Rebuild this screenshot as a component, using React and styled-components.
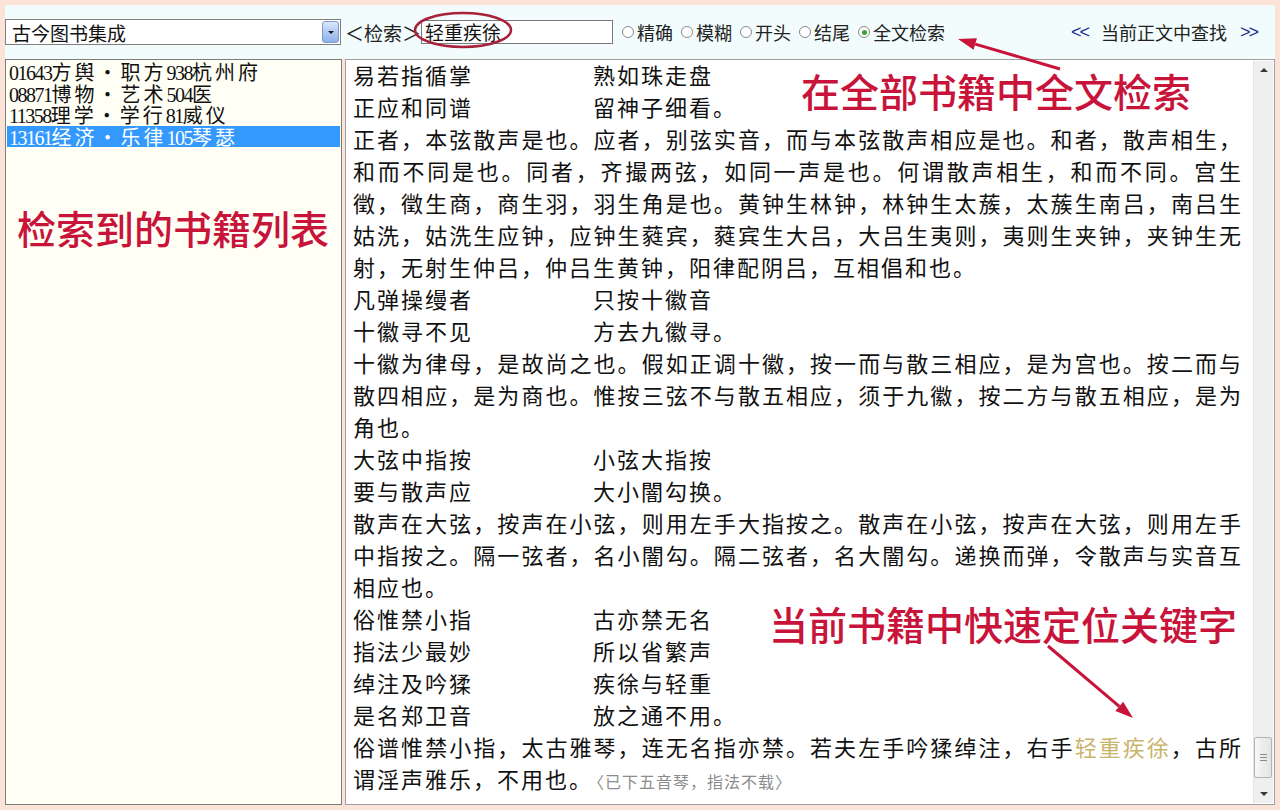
import React from 'react';
import styled, { createGlobalStyle } from 'styled-components';

const GlobalStyle = createGlobalStyle`
  html, body {
    margin: 0;
    padding: 0;
    background: #fbe3d7;
  }
  body {
    font-family: "Noto Sans CJK SC", "Liberation Sans", sans-serif;
    color: #111;
  }
`;

const books = [
  '01643方舆・职方938杭州府',
  '08871博物・艺术504医',
  '11358理学・学行81威仪',
  '13161经济・乐律105琴瑟',
];

const radios = [
  { label: '精确' },
  { label: '模糊' },
  { label: '开头' },
  { label: '结尾' },
  { label: '全文检索', checked: true },
];

// kind: v = verse (two columns), f = full justified line, l = last line of a paragraph
const lines = [
  { kind: 'v', a: '易若指循掌', b: '熟如珠走盘' },
  { kind: 'v', a: '正应和同谱', b: '留神子细看。' },
  { kind: 'f', t: '正者，本弦散声是也。应者，别弦实音，而与本弦散声相应是也。和者，散声相生，' },
  { kind: 'f', t: '和而不同是也。同者，齐撮两弦，如同一声是也。何谓散声相生，和而不同。宫生' },
  { kind: 'f', t: '徵，徵生商，商生羽，羽生角是也。黄钟生林钟，林钟生太蔟，太蔟生南吕，南吕生' },
  { kind: 'f', t: '姑洗，姑洗生应钟，应钟生蕤宾，蕤宾生大吕，大吕生夷则，夷则生夹钟，夹钟生无' },
  { kind: 'l', t: '射，无射生仲吕，仲吕生黄钟，阳律配阴吕，互相倡和也。' },
  { kind: 'v', a: '凡弹操缦者', b: '只按十徽音' },
  { kind: 'v', a: '十徽寻不见', b: '方去九徽寻。' },
  { kind: 'f', t: '十徽为律母，是故尚之也。假如正调十徽，按一而与散三相应，是为宫也。按二而与' },
  { kind: 'f', t: '散四相应，是为商也。惟按三弦不与散五相应，须于九徽，按二方与散五相应，是为' },
  { kind: 'l', t: '角也。' },
  { kind: 'v', a: '大弦中指按', b: '小弦大指按' },
  { kind: 'v', a: '要与散声应', b: '大小闇勾换。' },
  { kind: 'f', t: '散声在大弦，按声在小弦，则用左手大指按之。散声在小弦，按声在大弦，则用左手' },
  { kind: 'f', t: '中指按之。隔一弦者，名小闇勾。隔二弦者，名大闇勾。递换而弹，令散声与实音互' },
  { kind: 'l', t: '相应也。' },
  { kind: 'v', a: '俗惟禁小指', b: '古亦禁无名' },
  { kind: 'v', a: '指法少最妙', b: '所以省繁声' },
  { kind: 'v', a: '绰注及吟猱', b: '疾徐与轻重' },
  { kind: 'v', a: '是名郑卫音', b: '放之通不用。' },
];

const Page = styled.div`
  position: relative;
  width: 1280px;
  height: 810px;
  padding: 5px;
  box-sizing: border-box;
  display: flex;
  flex-direction: column;
  overflow: hidden;
`;

const Toolbar = styled.div`
  height: 54px;
  flex-shrink: 0;
  background: #f2fcfc;
  display: flex;
  align-items: center;
  padding: 0 18px 0 0;
  font-size: 18px;
`;

const Select = styled.div`
  width: 336px;
  height: 26px;
  box-sizing: border-box;
  border: 1px solid #7f7f7f;
  background: #fff;
  display: flex;
  align-items: center;
  padding-left: 6px;
  font-size: 19px;
  color: #111;
`;

const SelectText = styled.span`
  flex: 1;
`;

const DropButton = styled.span`
  width: 17px;
  height: 22px;
  margin-right: 1px;
  box-sizing: border-box;
  border: 1px solid #7a9bd0;
  border-radius: 3px;
  background: linear-gradient(to bottom, #dbe8fb 0%, #b4cdf2 45%, #8fb1e8 100%);
  display: flex;
  align-items: center;
  justify-content: center;

  &::after {
    content: '';
    border-left: 3px solid transparent;
    border-right: 3px solid transparent;
    border-top: 3px solid #1a1a1a;
  }
`;

const SearchLabel = styled.span`
  margin-left: 4px;
  font-size: 19px;
  color: #222;
`;

const SearchInput = styled.div`
  width: 192px;
  height: 24px;
  box-sizing: border-box;
  border: 1px solid #7a7a7a;
  background: #fff;
  padding-left: 3px;
  font-size: 19px;
  line-height: 22px;
  color: #111;
`;

const RadioGroup = styled.div`
  margin-left: 9px;
  display: flex;
  align-items: center;
  gap: 8px;
`;

const RadioItem = styled.label`
  display: flex;
  align-items: center;
  gap: 3px;
  color: #222;
  font-size: 18px;
`;

const RadioDot = styled.span`
  width: 12px;
  height: 12px;
  box-sizing: border-box;
  border: 1px solid #8a8a8a;
  border-radius: 50%;
  background: #fff;
  display: flex;
  align-items: center;
  justify-content: center;

  &::after {
    content: '';
    width: 5px;
    height: 5px;
    border-radius: 50%;
    background: ${p => (p.$on ? '#35a535' : 'transparent')};
  }
`;

const FindLink = styled.div`
  margin-left: auto;
  display: flex;
  align-items: center;
  gap: 13px;
  color: #222;
`;

const Chevron = styled.span`
  font-family: "Liberation Sans", sans-serif;
  font-size: 18px;
  letter-spacing: -2px;
  color: #1b2b8f;
`;

const Main = styled.div`
  flex: 1;
  display: flex;
  gap: 3px;
  min-height: 0;
`;

const ListPanel = styled.div`
  width: 337px;
  box-sizing: border-box;
  border: 1px solid #7d7d7d;
  background: #fffff5;
  padding: 1px 1px;
`;

const ListItem = styled.div`
  height: 21.5px;
  line-height: 21.5px;
  padding-left: 2px;
  font-size: 20px;
  letter-spacing: 3px;
  white-space: nowrap;
  color: ${p => (p.$active ? '#fff' : '#111')};
  background: ${p => (p.$active ? '#3399ff' : 'transparent')};
`;

const Num = styled.span`
  font-family: "Liberation Serif", serif;
  font-size: 20px;
  letter-spacing: -1.5px;
`;

const TextPanel = styled.div`
  flex: 1;
  box-sizing: border-box;
  border: 1px solid #a0a0a0;
  background: #fff;
  display: flex;
  min-width: 0;
`;

const Content = styled.div`
  flex: 1;
  margin-top: -2px;
  padding: 0 12px 0 7px;
  font-size: 22px;
  line-height: 32px;
  color: #111;
  overflow: hidden;
`;

const Verse = styled.div`
  display: grid;
  grid-template-columns: 240px 1fr;
  letter-spacing: 2px;
  white-space: nowrap;
`;

const Line = styled.div`
  white-space: nowrap;
  text-align: justify;
  text-align-last: ${p => (p.$full ? 'justify' : 'left')};
  letter-spacing: ${p => (p.$full ? '0' : '2px')};
`;

const Mark = styled.span`
  color: #c9b46c;
`;

const Note = styled.span`
  margin-left: 3px;
  font-size: 16px;
  letter-spacing: 1px;
  color: #8c8c8c;
`;

const Scrollbar = styled.div`
  width: 20px;
  margin: 1px 1px 1px 0;
  background: #efefef;
  border-left: 1px solid #e4e4e4;
  box-sizing: border-box;
  display: flex;
  flex-direction: column;
`;

const ScrollButton = styled.div`
  height: 18px;
  display: flex;
  align-items: center;
  justify-content: center;

  &::after {
    content: '';
    border-left: 4px solid transparent;
    border-right: 4px solid transparent;
    ${p => (p.$down ? 'border-top' : 'border-bottom')}: 4px solid #3a3a3a;
  }
`;

const Track = styled.div`
  flex: 1;
  display: flex;
  flex-direction: column;
  justify-content: flex-end;
  padding-bottom: 7px;
`;

const Thumb = styled.div`
  height: 41px;
  margin: 0 1px 0 0;
  box-sizing: border-box;
  border: 1px solid #b3b3b3;
  border-radius: 2px;
  background: linear-gradient(to right, #f7f7f7, #e3e3e3);
  display: flex;
  flex-direction: column;
  align-items: center;
  justify-content: center;
  gap: 2px;
`;

const Grip = styled.span`
  width: 7px;
  height: 1px;
  background: #8a8a8a;
`;

const Overlay = styled.svg`
  position: absolute;
  left: 0;
  top: 0;
  pointer-events: none;
`;

const Callout = styled.div`
  position: absolute;
  left: ${p => p.$x}px;
  top: ${p => p.$y}px;
  font-size: 39px;
  line-height: 39px;
  font-weight: 500;
  color: #c8143a;
  white-space: nowrap;
  pointer-events: none;
`;

function withNums(text) {
  return text.split(/(\d+)/).map((part, i) =>
    /^\d+$/.test(part) ? <Num key={i}>{part}</Num> : <React.Fragment key={i}>{part}</React.Fragment>
  );
}

function Arrow({ from, to }) {
  const dx = to[0] - from[0];
  const dy = to[1] - from[1];
  const len = Math.hypot(dx, dy);
  const ux = dx / len;
  const uy = dy / len;
  const bx = to[0] - ux * 18;
  const by = to[1] - uy * 18;
  const nx = -uy * 6;
  const ny = ux * 6;
  return (
    <g>
      <line x1={from[0]} y1={from[1]} x2={bx} y2={by} stroke="#c8143a" strokeWidth="3" />
      <polygon
        points={`${to[0]},${to[1]} ${bx + nx},${by + ny} ${bx - nx},${by - ny}`}
        fill="#c8143a"
      />
    </g>
  );
}

export default function App() {
  return (
    <Page>
      <GlobalStyle />
      <Toolbar>
        <Select>
          <SelectText>古今图书集成</SelectText>
          <DropButton />
        </Select>
        <SearchLabel>＜检索＞</SearchLabel>
        <SearchInput>轻重疾徐</SearchInput>
        <RadioGroup>
          {radios.map(r => (
            <RadioItem key={r.label}>
              <RadioDot $on={r.checked} />
              {r.label}
            </RadioItem>
          ))}
        </RadioGroup>
        <FindLink>
          <Chevron>&lt;&lt;</Chevron>
          <span>当前正文中查找</span>
          <Chevron>&gt;&gt;</Chevron>
        </FindLink>
      </Toolbar>

      <Main>
        <ListPanel>
          {books.map((b, i) => (
            <ListItem key={b} $active={i === books.length - 1}>
              {withNums(b)}
            </ListItem>
          ))}
        </ListPanel>

        <TextPanel>
          <Content>
            {lines.map((ln, i) =>
              ln.kind === 'v' ? (
                <Verse key={i}>
                  <span>{ln.a}</span>
                  <span>{ln.b}</span>
                </Verse>
              ) : (
                <Line key={i} $full={ln.kind === 'f'}>
                  {ln.t}
                </Line>
              )
            )}
            <Line $full>
              俗谱惟禁小指，太古雅琴，连无名指亦禁。若夫左手吟猱绰注，右手<Mark>轻重疾徐</Mark>，古所
            </Line>
            <Line>
              谓淫声雅乐，不用也。<Note>〈已下五音琴，指法不载〉</Note>
            </Line>
          </Content>
          <Scrollbar>
            <ScrollButton />
            <Track>
              <Thumb>
                <Grip />
                <Grip />
                <Grip />
              </Thumb>
            </Track>
            <ScrollButton $down />
          </Scrollbar>
        </TextPanel>
      </Main>

      <Callout $x={801} $y={71}>在全部书籍中全文检索</Callout>
      <Callout $x={17} $y={208}>检索到的书籍列表</Callout>
      <Callout $x={769} $y={604}>当前书籍中快速定位关键字</Callout>

      <Overlay width="1280" height="810" viewBox="0 0 1280 810">
        <ellipse cx="463" cy="30" rx="48" ry="17" fill="none" stroke="#a8203a" strokeWidth="2.5" />
        <Arrow from={[1060, 69]} to={[958, 39]} />
        <Arrow from={[1048, 646]} to={[1133, 718]} />
      </Overlay>
    </Page>
  );
}
